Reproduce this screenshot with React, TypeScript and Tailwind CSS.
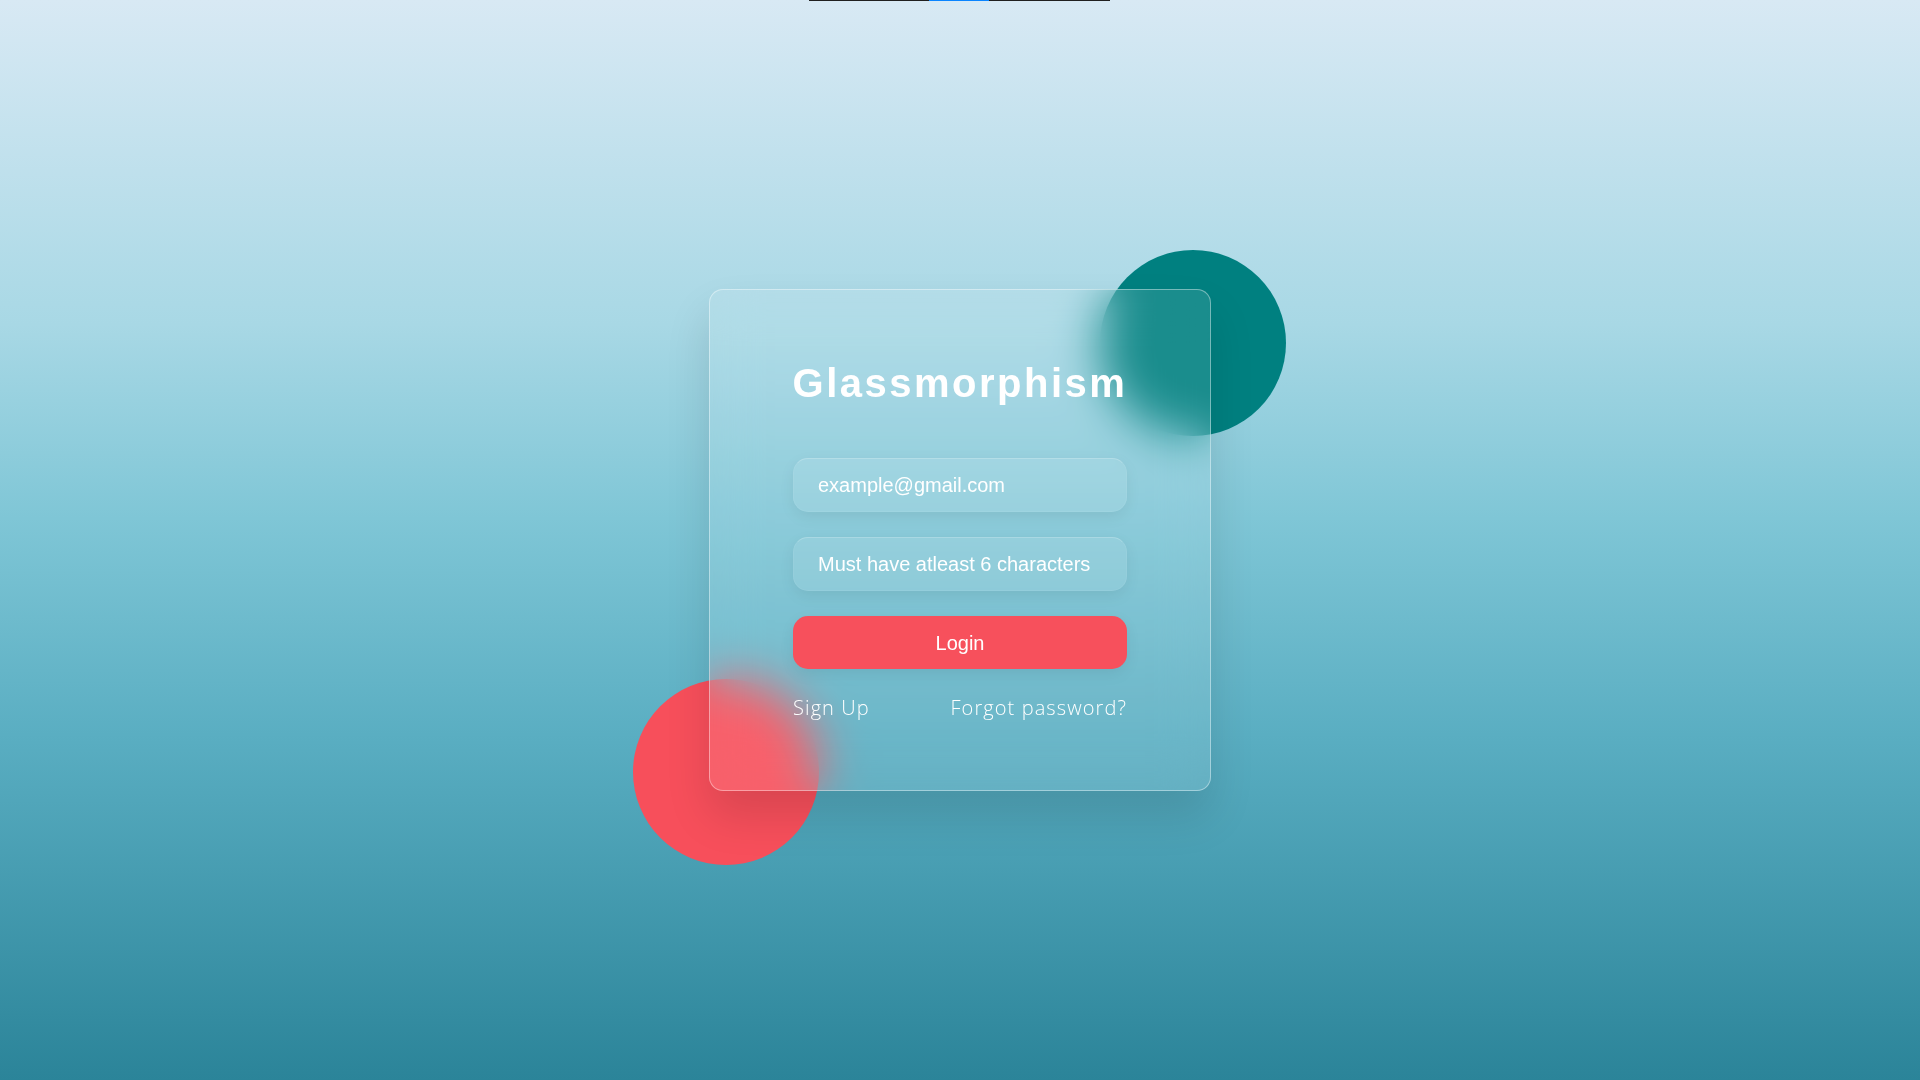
export default function App() {
  return (
    <div className="relative flex h-[1080px] w-full items-center justify-center overflow-hidden bg-[linear-gradient(to_bottom,#d8e9f4_0%,#a8d8e5_30%,#7fc6d6_48%,#5aaec2_68%,#2b8499_100%)]">
      {/* thin bar at the very top */}
      <div className="absolute left-[809px] top-0 flex h-px w-[301px]">
        <div className="h-px w-[120px] bg-[#1f1f1f]" />
        <div className="h-px w-[60px] bg-[#0a84ff]" />
        <div className="h-px flex-1 bg-[#1f1f1f]" />
      </div>

      <div className="relative h-[502px] w-[502px]">
        <div className="absolute left-[391px] top-[-39px] h-[186px] w-[186px] rounded-full bg-[#008080]" />
        <div className="absolute left-[-76px] top-[390px] h-[186px] w-[186px] rounded-full bg-[#f74f5b]" />

        <div className="relative z-10 flex h-full w-full flex-col items-center rounded-[14px] border border-white/40 bg-white/10 pt-[73px] shadow-[0_25px_45px_rgba(0,0,0,0.12)] backdrop-blur-[24px]">
          <h1 className="text-[40px] font-bold leading-[40px] tracking-[2.5px] text-white [font-family:'Liberation_Sans',Arial,sans-serif]">
            Glassmorphism
          </h1>

          <div className="mt-[55px] flex w-[334px] flex-col gap-[25px] [font-family:'Liberation_Sans',Arial,sans-serif]">
            <input
              type="email"
              placeholder="example@gmail.com"
              className="h-[54px] w-full rounded-[15px] border border-white/5 border-t-white/20 bg-white/10 pl-[24px] text-[20px] text-white shadow-[0_5px_15px_rgba(0,0,0,0.07)] outline-none placeholder:text-white"
            />
            <input
              type="password"
              placeholder="Must have atleast 6 characters"
              className="h-[54px] w-full rounded-[15px] border border-white/5 border-t-white/20 bg-white/10 pl-[24px] text-[20px] text-white shadow-[0_5px_15px_rgba(0,0,0,0.07)] outline-none placeholder:text-white"
            />
            <button className="h-[53px] w-full rounded-[15px] bg-[#f7505c] text-[20px] text-white shadow-[0_5px_15px_rgba(0,0,0,0.07)]">
              Login
            </button>
          </div>

          <div className="mt-[25px] flex w-[334px] justify-between text-[20px] font-light leading-[28px] tracking-[1.1px] text-white [font-family:'Open_Sans',sans-serif]">
            <a href="#">Sign Up</a>
            <a href="#">Forgot password?</a>
          </div>
        </div>
      </div>
    </div>
  );
}
